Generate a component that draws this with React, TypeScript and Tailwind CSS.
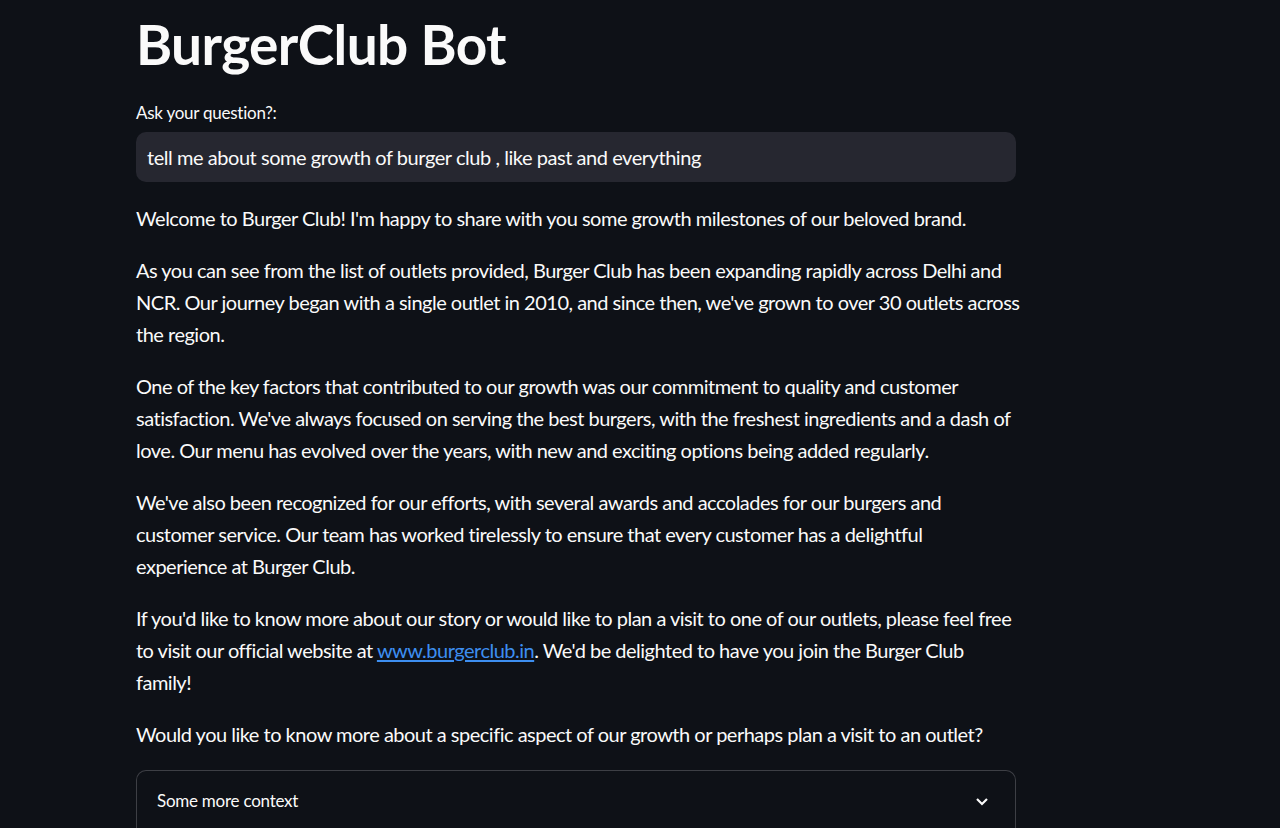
import React from "react";

const paras: React.ReactNode[][] = [
  ["Welcome to Burger Club! I'm happy to share with you some growth milestones of our beloved brand."],
  [
    "As you can see from the list of outlets provided, Burger Club has been expanding rapidly across Delhi and",
    "NCR. Our journey began with a single outlet in 2010, and since then, we've grown to over 30 outlets across",
    "the region.",
  ],
  [
    "One of the key factors that contributed to our growth was our commitment to quality and customer",
    "satisfaction. We've always focused on serving the best burgers, with the freshest ingredients and a dash of",
    "love. Our menu has evolved over the years, with new and exciting options being added regularly.",
  ],
  [
    "We've also been recognized for our efforts, with several awards and accolades for our burgers and",
    "customer service. Our team has worked tirelessly to ensure that every customer has a delightful",
    "experience at Burger Club.",
  ],
  [
    "If you'd like to know more about our story or would like to plan a visit to one of our outlets, please feel free",
    <>
      to visit our official website at{" "}
      <a href="#" className="text-[#3d8ef0] underline underline-offset-2">
        www.burgerclub.in
      </a>
      . We'd be delighted to have you join the Burger Club
    </>,
    "family!",
  ],
  ["Would you like to know more about a specific aspect of our growth or perhaps plan a visit to an outlet?"],
];

export default function App() {
  return (
    <div
      className="min-h-[828px] w-full bg-[#0e1117] text-[#fafafa] overflow-hidden"
      style={{ fontFamily: "Lato, 'Noto Sans', sans-serif" }}
    >
      <div className="ml-[136px] w-[880px] pt-[11px]">
        <h1 className="text-[55px] font-bold leading-[66px] tracking-[-0.6px]">BurgerClub Bot</h1>
        <div className="mt-[24px] text-[17px] leading-[24px] tracking-[-0.25px]">Ask your question?:</div>
        <div className="mt-[7px] h-[50px] rounded-[10px] bg-[#262730] flex items-center px-[11px] text-[20px] tracking-[-0.45px]">
          tell me about some growth of burger club , like past and everything
        </div>
        <div className="mt-[20px]">
          {paras.map((lines, i) => (
            <p key={i} className="mb-[20px] text-[20px] leading-[32px] whitespace-nowrap tracking-[-0.5px]">
              {lines.map((l, j) => (
                <React.Fragment key={j}>
                  {l}
                  {j < lines.length - 1 && <br />}
                </React.Fragment>
              ))}
            </p>
          ))}
        </div>
        <div className="h-[80px] rounded-t-[10px] border border-b-0 border-[#3d3f45] flex items-start pt-[18px] px-[20px] justify-between">
          <span className="text-[17px] leading-[24px] tracking-[-0.25px]">Some more context</span>
          <svg width="14" height="10" viewBox="0 0 14 10" className="mt-[8px] mr-[6px]">
            <path d="M2 2 L7 7 L12 2" stroke="#fafafa" strokeWidth="2.2" fill="none" />
          </svg>
        </div>
      </div>
    </div>
  );
}
